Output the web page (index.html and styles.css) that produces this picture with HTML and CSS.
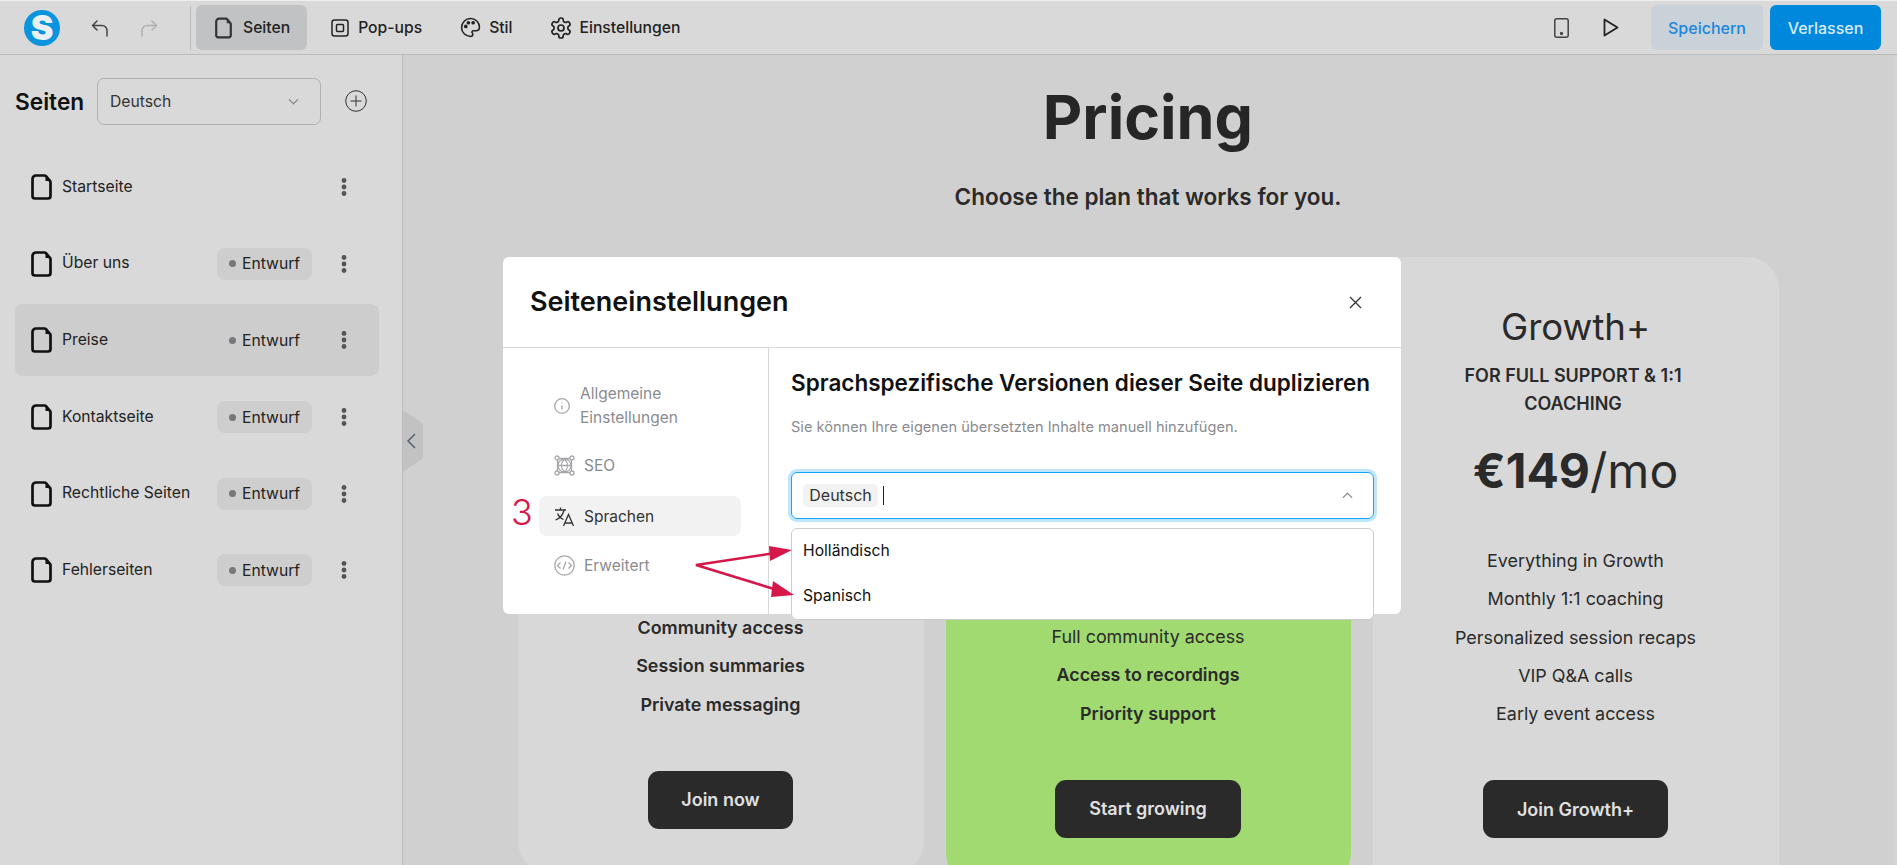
FILE: index.html
```html
<!DOCTYPE html>
<html lang="de">
<head>
<meta charset="utf-8">
<title>Seiteneinstellungen</title>
<link rel="stylesheet" href="styles.css">
</head>
<body>
<svg class="defs" aria-hidden="true">
  <symbol id="file" viewBox="0 0 21 26"><path d="M5 1.500h8.500a2 2 0 0 1 1.500.7l3.900 4.600a2 2 0 0 1 .6 1.400V22a2.500 2.500 0 0 1-2.500 2.500H4A2.500 2.500 0 0 1 1.500 22V5A3.500 3.500 0 0 1 5 1.500z" fill="none" stroke="currentColor" stroke-width="2.700" stroke-linejoin="round"/><path d="M14.500 3v4h4z" fill="currentColor"/></symbol>
  <symbol id="dots" viewBox="0 0 6 18"><circle cx="3" cy="2.500" r="2.400"/><circle cx="3" cy="9" r="2.400"/><circle cx="3" cy="15.500" r="2.400"/></symbol>
</svg>
<header class="topbar">
  <div class="logo">S</div>
  <svg class="hist" viewBox="0 0 20 20"><path d="M7 3 2.500 7.500 7 12M2.500 7.500H12a5 5 0 0 1 5 5V18"/></svg>
  <svg class="hist hist-off" viewBox="0 0 20 20"><path d="M13 3l4.500 4.500L13 12M17.500 7.500H8a5 5 0 0 0-5 5V18"/></svg>
  <div class="vsep"></div>
  <nav class="tabs">
    <a class="tab tab-on"><svg class="tab-file"><use href="#file"/></svg>Seiten</a>
    <a class="tab tab-pop"><svg class="tab-ico" viewBox="0 0 18 18"><rect x="1" y="1" width="16" height="16" rx="2.500"/><rect x="5.500" y="5.500" width="7" height="7" rx="1"/></svg>Pop-ups</a>
    <a class="tab tab-stil"><svg class="tab-ico tab-pal" viewBox="0 0 20 20"><path d="M10 1.500a8.500 8.500 0 1 0 0 17c1.500 0 2.200-1 2.200-2 0-.6-.3-1-.6-1.500-.4-.6-.3-1.900 1.300-1.900h2.300c1.900 0 3.300-1.400 3.300-3.300C18.500 5 14.700 1.500 10 1.500z"/><circle cx="5.500" cy="9" r="1" fill="#222"/><circle cx="8" cy="5.500" r="1" fill="#222"/><circle cx="12.500" cy="5.500" r="1" fill="#222"/></svg>Stil</a>
    <a class="tab"><svg class="tab-ico tab-gear" viewBox="0 0 24 24"><path d="M12.220 2h-.44a2 2 0 0 0-2 2v.18a2 2 0 0 1-1 1.730l-.43.25a2 2 0 0 1-2 0l-.15-.08a2 2 0 0 0-2.730.73l-.22.38a2 2 0 0 0 .73 2.730l.15.1a2 2 0 0 1 1 1.720v.51a2 2 0 0 1-1 1.740l-.15.09a2 2 0 0 0-.73 2.730l.22.38a2 2 0 0 0 2.730.73l.15-.08a2 2 0 0 1 2 0l.43.25a2 2 0 0 1 1 1.730V20a2 2 0 0 0 2 2h.44a2 2 0 0 0 2-2v-.18a2 2 0 0 1 1-1.730l.43-.25a2 2 0 0 1 2 0l.15.08a2 2 0 0 0 2.730-.73l.22-.39a2 2 0 0 0-.73-2.730l-.15-.08a2 2 0 0 1-1-1.740v-.5a2 2 0 0 1 1-1.740l.15-.09a2 2 0 0 0 .73-2.730l-.22-.38a2 2 0 0 0-2.730-.73l-.15.08a2 2 0 0 1-2 0l-.43-.25a2 2 0 0 1-1-1.730V4a2 2 0 0 0-2-2z"/><circle cx="12" cy="12" r="3"/></svg>Einstellungen</a>
  </nav>
  <div class="top-right">
    <svg class="phone" viewBox="0 0 15 20"><rect x=".8" y=".8" width="13.400" height="18.400" rx="2"/><circle cx="7.500" cy="15.500" r=".9" fill="#444"/></svg>
    <svg class="play" viewBox="0 0 16 19"><path d="M1.500 1.500v16L14.500 9.500z" stroke-linejoin="round"/></svg>
    <button class="btn btn-save">Speichern</button>
    <button class="btn btn-exit">Verlassen</button>
  </div>
</header>

<div class="main">
  <aside class="sidebar">
    <div class="side-head">
      <h2 class="side-title">Seiten</h2>
      <div class="select"><span>Deutsch</span><svg class="chev" viewBox="0 0 12 7"><path d="M1 1l5 5 5-5"/></svg></div>
      <svg class="add" viewBox="0 0 22 22"><circle cx="11" cy="11" r="10.300"/><path d="M11 5.500v11M5.500 11h11"/></svg>
    </div>
    <ul class="pages">
      <li class="page"><svg class="page-ico"><use href="#file"/></svg><span class="page-name">Startseite</span><svg class="dots dots-only"><use href="#dots"/></svg></li>
      <li class="page"><svg class="page-ico"><use href="#file"/></svg><span class="page-name">Über uns</span><span class="badge"><i></i>Entwurf</span><svg class="dots"><use href="#dots"/></svg></li>
      <li class="page page-on"><svg class="page-ico"><use href="#file"/></svg><span class="page-name">Preise</span><span class="badge"><i></i>Entwurf</span><svg class="dots"><use href="#dots"/></svg></li>
      <li class="page"><svg class="page-ico"><use href="#file"/></svg><span class="page-name">Kontaktseite</span><span class="badge"><i></i>Entwurf</span><svg class="dots"><use href="#dots"/></svg></li>
      <li class="page"><svg class="page-ico"><use href="#file"/></svg><span class="page-name">Rechtliche Seiten</span><span class="badge"><i></i>Entwurf</span><svg class="dots"><use href="#dots"/></svg></li>
      <li class="page"><svg class="page-ico"><use href="#file"/></svg><span class="page-name">Fehlerseiten</span><span class="badge"><i></i>Entwurf</span><svg class="dots"><use href="#dots"/></svg></li>
    </ul>
  </aside>

  <main class="canvas">
    <div class="handle"><svg viewBox="0 0 9 16"><path d="M8 1 1 8l7 7"/></svg></div>
    <h1 class="pricing">Pricing</h1>
    <p class="lead">Choose the plan that works for you.</p>
    <section class="cards">
      <article class="card card-a">
        <ul class="feats">
          <li class="strong">Community access</li>
          <li class="strong">Session summaries</li>
          <li class="strong">Private messaging</li>
        </ul>
        <a class="cta cta-a">Join now</a>
      </article>
      <article class="card card-b">
        <ul class="feats">
          <li>Full community access</li>
          <li class="strong">Access to recordings</li>
          <li class="strong">Priority support</li>
        </ul>
        <a class="cta cta-b">Start growing</a>
      </article>
      <article class="card card-c">
        <h3 class="plan">Growth+</h3>
        <p class="plan-sub">FOR FULL SUPPORT &amp; 1:1 COACHING</p>
        <p class="price"><b>€149</b>/mo</p>
        <ul class="feats">
          <li>Everything in Growth</li>
          <li>Monthly 1:1 coaching</li>
          <li>Personalized session recaps</li>
          <li>VIP Q&amp;A calls</li>
          <li>Early event access</li>
        </ul>
        <a class="cta cta-c">Join Growth+</a>
      </article>
    </section>
  </main>
</div>

<div class="modal">
  <div class="modal-head">
    <h2>Seiteneinstellungen</h2>
    <svg class="close" viewBox="0 0 13 13"><path d="M1 1l11 11M12 1 1 12"/></svg>
  </div>
  <div class="modal-body">
    <nav class="mnav">
      <a class="mitem mitem-two"><svg class="mi mi-info" viewBox="0 0 16 16"><circle cx="8" cy="8" r="7.300"/><path d="M8 7.500v4M8 4.400v.8"/></svg><span>Allgemeine<br>Einstellungen</span></a>
      <a class="mitem mitem-seo"><svg class="mi" viewBox="0 0 21 21"><circle cx="10.500" cy="10.500" r="6.500"/><path d="M4 10.500h13M10.500 4c-4 4-4 9 0 13M10.500 4c4 4 4 9 0 13M5 3.500h11M5 17.500h11M3.500 5v11M17.500 5v11"/><circle cx="3" cy="3" r="2"/><circle cx="18" cy="3" r="2"/><circle cx="3" cy="18" r="2"/><circle cx="18" cy="18" r="2"/></svg><span>SEO</span></a>
      <a class="mitem mitem-on"><svg class="mi" viewBox="0 0 21 21"><path d="M1 4h11M6.500 1.500V4M10 4c-.8 4-3.500 8-8.500 10M3.500 7.500c1 2.500 3.500 5 6 6M9.500 20l5-11.500 5 11.500M11 17h7"/></svg><span>Sprachen</span></a>
      <a class="mitem"><svg class="mi" viewBox="0 0 21 21"><circle cx="10.500" cy="10.500" r="9.700"/><path d="M6.500 7.500l-3 3 3 3M14.500 7.500l3 3-3 3M12 6.500l-3 8"/></svg><span>Erweitert</span></a>
    </nav>
    <div class="mpane">
      <h3>Sprachspezifische Versionen dieser Seite duplizieren</h3>
      <p>Sie können Ihre eigenen übersetzten Inhalte manuell hinzufügen.</p>
      <div class="combo">
        <span class="tag">Deutsch</span><span class="caret"></span>
        <svg class="chev chev-up" viewBox="0 0 12 7"><path d="M1 6l5-5 5 5"/></svg>
      </div>
      <ul class="options">
        <li>Holländisch</li>
        <li>Spanisch</li>
      </ul>
    </div>
  </div>
</div>

<span class="step">3</span>
<svg class="arrows" viewBox="0 0 110 60">
  <path class="shaft" d="M78 9.500 2 21 80 45"/>
  <path d="M75 2 98 6 76 17z"/>
  <path d="M79 37 100 51 77 53z"/>
</svg>
</body>
</html>
```
FILE: styles.css
```css
* { box-sizing: border-box; }
html, body { margin: 0; height: 100%; }
body {
  width: 1897px;
  height: 865px;
  overflow: hidden;
  position: relative;
  display: flex;
  flex-direction: column;
  font-family: Inter, "Noto Sans", sans-serif;
  font-size: 15.700px;
  color: #222;
  background: #d9d9d9;
}
h1, h2, h3, p, ul { margin: 0; padding: 0; }
ul { list-style: none; }
svg { display: block; flex: none; }
.defs { width: 0; height: 0; position: absolute; }

/* top bar */
.topbar {
  height: 55px;
  flex: none;
  display: flex;
  align-items: center;
  padding-left: 24px;
  border-top: 1px solid #eee;
  border-bottom: 1px solid #bcbcbc;
  background: #d9d9d9;
}
.logo {
  width: 36px;
  height: 36px;
  border-radius: 50%;
  background: #0a94de;
  color: #e8f0f5;
  font-weight: 900;
  font-size: 34px;
  line-height: 36px;
  text-align: center;
}
.hist { width: 20px; height: 20px; margin-left: 30px; fill: none; stroke: #444; stroke-width: 1.500; stroke-linecap: round; stroke-linejoin: round; }
.hist-off { margin-left: 29px; stroke: #b0b0b0; }
.vsep { width: 1px; height: 44px; background: #bcbcbc; margin-left: 31px; }
.tabs { display: flex; gap: 5px; margin-left: 5px; }
.tab {
  height: 45px;
  display: flex;
  align-items: center;
  gap: 9px;
  padding: 0 19px;
  border-radius: 6px;
  font-weight: 500;
  color: #222;
}
.tab-on { background: #c0c2c4; gap: 11px; padding-right: 17px; }
.tab-pop { margin-right: -5px; }
.tab-stil { margin-right: -5px; }
.tab-file { width: 17px; height: 22px; color: #333; }
.tab-ico { width: 18px; height: 20px; fill: none; stroke: #222; stroke-width: 1.500; }
.tab-pal { width: 21px; height: 21px; margin-right: -1px; }
.tab-gear { width: 24px; height: 24px; stroke-width: 1.700; margin-left: -2px; margin-right: -2px; }
.top-right { margin-left: auto; display: flex; align-items: center; padding-right: 16px; }
.phone { width: 15px; height: 20px; fill: none; stroke: #444; stroke-width: 1.500; }
.play { width: 16px; height: 19px; margin-left: 34px; fill: none; stroke: #222; stroke-width: 1.800; }
.btn {
  height: 45px;
  border: 0;
  border-radius: 6px;
  font: 500 16px Inter, sans-serif;
  width: 112px;
  padding: 0;
}
.btn-save { background: #c9d1d9; color: #1a87dc; margin-left: 32px; }
.btn-exit { background: #0088dc; color: #d9ebf8; margin-left: 7px; width: 111px; }

/* main */
.main { flex: 1; min-height: 0; display: flex; }
.sidebar { width: 403px; flex: none; background: #d9d9d9; border-right: 1px solid #bcbcbc; }
.side-head { height: 92px; margin-bottom: 4px; padding-left: 15px; display: flex; align-items: center; }
.side-title { font-size: 22.700px; font-weight: 600; color: #111; width: 82px; }
.select {
  width: 224px;
  height: 47px;
  border: 1px solid #b0b0b0;
  border-radius: 7px;
  display: flex;
  align-items: center;
  justify-content: space-between;
  padding: 0 21px 0 12px;
  color: #333;
}
.chev { width: 11px; height: 7px; fill: none; stroke: #909090; stroke-width: 1.300; }
.add { width: 22px; height: 22px; margin-left: 24px; fill: none; stroke: #333; stroke-width: 1; }
.pages { display: flex; flex-direction: column; gap: 4.700px; margin-left: 15px; width: 364px; }
.page {
  height: 72px;
  display: flex;
  align-items: center;
  padding: 0 24px 0 16px;
  border-radius: 8px;
  color: #222;
}
.page-on { background: #cdcdcd; }
.page-ico { width: 21px; height: 26px; margin-right: 10px; color: #111; }
.page-name { margin-bottom: 2px; }
.badge {
  margin-left: auto;
  width: 95px;
  height: 32px;
  background: #cecece;
  border-radius: 8px;
  display: flex;
  align-items: center;
  gap: 6px;
  padding-left: 12px;
}
.badge i { width: 7px; height: 7px; border-radius: 50%; background: #77787c; }
.page-on .badge { background: transparent; }
.dots { width: 6px; height: 18px; margin-left: 28.500px; fill: #555; margin-right: 8.500px; }
.dots-only { margin-left: auto; }

/* canvas */
.canvas {
  flex: 1;
  min-width: 0;
  position: relative;
  overflow: hidden;
  background: #d0d0d0;
  border-right: 4px solid #d4d4d4;
  text-align: center;
}
.handle {
  position: absolute;
  left: 0;
  top: 355px;
  width: 20px;
  height: 62px;
  background: #c2c2c2;
  clip-path: polygon(0 0, 100% 22%, 100% 78%, 0 100%);
  display: flex;
  align-items: center;
  justify-content: center;
  padding-right: 4px;
}
.handle svg { width: 9px; height: 16px; fill: none; stroke: #555e6a; stroke-width: 1.500; }
.pricing { font-size: 61px; font-weight: 700; line-height: 76px; color: #262626; padding-top: 24px; }
.lead { font-size: 22.500px; font-weight: 600; line-height: 30px; color: #2a2a2a; margin-top: 27px; }
.cards {
  display: grid;
  grid-template-columns: 406px 405px 406px;
  justify-content: center;
  gap: 22px;
  margin-top: 45px;
}
.card {
  background: #d8d8d8;
  border-radius: 32px;
  display: flex;
  flex-direction: column;
  align-items: center;
  color: #2a2a2a;
}
.card-a { padding: 352px 20px 44px; height: 616px; }
.card-b { padding: 361px 20px 44px; height: 628px; background: #a0da71; }
.card-c { padding: 48px 20px 60px; height: 660px; }
.plan { font-size: 36.500px; font-weight: 400; line-height: 44px; }
.plan-sub { font-size: 18px; font-weight: 600; line-height: 27.500px; margin-top: 13px; width: 250px; margin-right: 5px; }
.price { font-size: 48px; line-height: 58px; margin-top: 25px; }
.price b { font-weight: 700; }
.card-c .feats { margin-top: 42px; }
.feats li { font-size: 17.900px; line-height: 38.300px; }
.feats .strong { font-weight: 600; }
.cta {
  margin-top: 47px;
  height: 58px;
  display: flex;
  align-items: center;
  justify-content: center;
  background: #2a2a2a;
  color: #e0e0e0;
  font-size: 18px;
  font-weight: 600;
  border-radius: 11px;
}
.cta-a { width: 145px; }
.cta-b { width: 186px; }
.cta-c { width: 185px; }

/* modal */
.modal {
  position: absolute;
  left: 503px;
  top: 257px;
  width: 898px;
  height: 357px;
  background: #fff;
  border-radius: 6px;
  display: flex;
  flex-direction: column;
}
.modal-head {
  height: 91px;
  flex: none;
  display: flex;
  align-items: center;
  justify-content: space-between;
  padding: 0 39px 2px 27px;
  border-bottom: 1px solid #d8d8d8;
}
.modal-head h2 { font-size: 27px; font-weight: 600; color: #111; }
.close { width: 13px; height: 13px; fill: none; stroke: #333; stroke-width: 1.300; margin-top: 2px; }
.modal-body { flex: 1; min-height: 0; display: flex; }
.mnav {
  width: 266px;
  flex: none;
  border-right: 1px solid #d8d8d8;
  padding: 33px 27px 0 36px;
  display: flex;
  flex-direction: column;
}
.mitem {
  display: flex;
  align-items: center;
  gap: 9px;
  padding-left: 15px;
  color: #8a8b90;
  height: 40px;
  flex: none;
  border-radius: 8px;
  font-size: 15.500px;
}
.mitem-two { height: 50px; line-height: 24px; gap: 10px; }
.mitem-seo { margin-top: 14px; margin-bottom: 11px; }
.mitem-on { background: #f2f2f2; color: #333; margin-bottom: 9px; }
.mi { width: 21px; height: 21px; fill: none; stroke: #a6a7ab; stroke-width: 1.300; }
.mi-info { width: 16px; height: 16px; }
.mitem-on .mi { stroke: #333; }
.mpane { flex: 1; min-width: 0; padding: 20px 28px 0 22px; position: relative; }
.mpane h3 { font-size: 22.500px; font-weight: 600; line-height: 30px; color: #111; }
.mpane p { font-size: 14.600px; line-height: 24px; color: #8a8b90; margin-top: 17px; }
.combo {
  width: 583px;
  height: 47px;
  margin-top: 33px;
  border: 1px solid #14a3ff;
  box-shadow: 0 0 0 3px #bfe6ff;
  border-radius: 6px;
  display: flex;
  align-items: center;
  padding-left: 11px;
  position: relative;
}
.tag { background: #f2f2f2; border-radius: 5px; height: 23px; width: 75px; line-height: 23px; text-align: center; color: #333; font-size: 16px; }
.caret { width: 1px; height: 19px; background: #222; margin-left: 5px; }
.chev-up { margin-left: auto; margin-right: 20px; }
.options {
  position: absolute;
  left: 22px;
  top: 180px;
  width: 583px;
  height: 92px;
  background: #fff;
  border: 1px solid #ccc;
  border-radius: 6px;
  z-index: 2;
}
.options li { height: 45px; line-height: 44px; padding-left: 11px; color: #111; }

/* annotation */
.step {
  position: absolute;
  left: 511px;
  top: 492px;
  font-size: 36px;
  font-weight: 300;
  line-height: 40px;
  color: #d5174a;
}
.arrows {
  position: absolute;
  left: 694px;
  top: 544px;
  width: 110px;
  height: 60px;
  fill: #d5174a;
  z-index: 3;
}
.arrows .shaft { fill: none; stroke: #d5174a; stroke-width: 2.600; }
```
